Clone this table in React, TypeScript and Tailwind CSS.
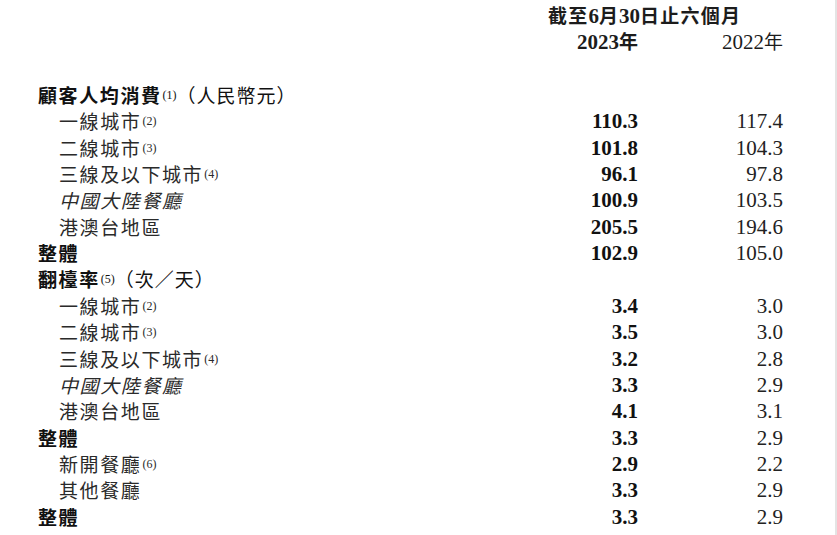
import React from 'react';

type Row = {
  label: string;
  note?: string;
  kind: 'head' | 'item' | 'italic';
  cur?: string;
  prev?: string;
  suffix?: string;
};

const rows: Row[] = [
  { label: '顧客人均消費', note: '(1)', kind: 'head', suffix: '（人民幣元）' },
  { label: '一線城市', note: '(2)', kind: 'item', cur: '110.3', prev: '117.4' },
  { label: '二線城市', note: '(3)', kind: 'item', cur: '101.8', prev: '104.3' },
  { label: '三線及以下城市', note: '(4)', kind: 'item', cur: '96.1', prev: '97.8' },
  { label: '中國大陸餐廳', kind: 'italic', cur: '100.9', prev: '103.5' },
  { label: '港澳台地區', kind: 'item', cur: '205.5', prev: '194.6' },
  { label: '整體', kind: 'head', cur: '102.9', prev: '105.0' },
  { label: '翻檯率', note: '(5)', kind: 'head', suffix: '（次／天）' },
  { label: '一線城市', note: '(2)', kind: 'item', cur: '3.4', prev: '3.0' },
  { label: '二線城市', note: '(3)', kind: 'item', cur: '3.5', prev: '3.0' },
  { label: '三線及以下城市', note: '(4)', kind: 'item', cur: '3.2', prev: '2.8' },
  { label: '中國大陸餐廳', kind: 'italic', cur: '3.3', prev: '2.9' },
  { label: '港澳台地區', kind: 'item', cur: '4.1', prev: '3.1' },
  { label: '整體', kind: 'head', cur: '3.3', prev: '2.9' },
  { label: '新開餐廳', note: '(6)', kind: 'item', cur: '2.9', prev: '2.2' },
  { label: '其他餐廳', kind: 'item', cur: '3.3', prev: '2.9' },
  { label: '整體', kind: 'head', cur: '3.3', prev: '2.9' },
];

const cjk = "font-['Noto_Sans_CJK_TC',sans-serif]";
const serif = "font-['Liberation_Serif',serif]";

function Note({ n }: { n: string }) {
  return (
    <span className="font-['Liberation_Serif',serif] text-[12px] tracking-normal relative -top-[4px] ml-[1px] font-normal not-italic">
      {n}
    </span>
  );
}

export default function App() {
  return (
    <div className="w-[837px] h-[535px] bg-white border-r-2 border-[#e4e4e4] pl-[38px] pr-[52px] pt-[2px] text-[#1c1c1c] overflow-hidden">
      {/* period header */}
      <div className="flex h-[26.4px] leading-[26.4px]">
        <div className="flex-1" />
        <div className={`w-[245px] pl-[10px] text-[19px] font-bold tracking-[1.2px] ${cjk}`}>
          截至<span className={`${serif} text-[21px] tracking-normal`}>6</span>月
          <span className={`${serif} text-[21px] tracking-normal`}>30</span>日止六個月
        </div>
      </div>
      <div className="flex h-[26.4px] leading-[26.4px]">
        <div className="flex-1" />
        <div className={`w-[100px] text-right font-bold`}>
          <span className={`${serif} text-[21px]`}>2023</span>
          <span className={`${cjk} text-[19px]`}>年</span>
        </div>
        <div className="w-[145px] text-right">
          <span className={`${serif} text-[21px]`}>2022</span>
          <span className={`${cjk} text-[19px]`}>年</span>
        </div>
      </div>

      <div className="mt-[27px]">
        {rows.map((r, i) => (
          <div key={i} className="flex h-[26.375px] leading-[26.375px]">
            <div
              className={`flex-1 whitespace-nowrap text-[19px] tracking-[1.6px] ${cjk} ${
                r.kind === 'head' ? 'font-bold text-[#111]' : 'pl-[21px] text-[#2a2a2a]'
              } ${r.kind === 'italic' ? 'italic' : ''}`}
            >
              {r.label}
              {r.note && <Note n={r.note} />}
              {r.suffix && <span className="font-normal tracking-[1px]">{r.suffix}</span>}
            </div>
            <div className={`w-[100px] text-right font-bold text-[21px] text-[#111] ${serif}`}>{r.cur}</div>
            <div className={`w-[145px] text-right text-[21px] text-[#222] ${serif}`}>{r.prev}</div>
          </div>
        ))}
      </div>
    </div>
  );
}
